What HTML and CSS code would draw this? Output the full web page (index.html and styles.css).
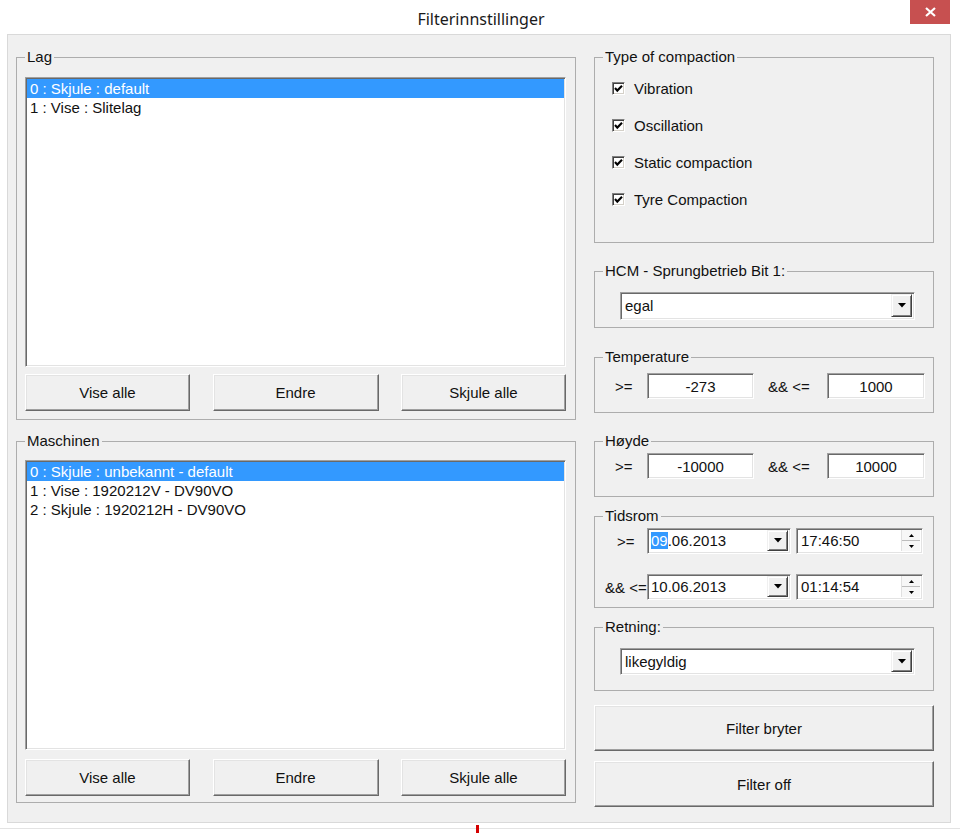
FILE: index.html
```html
<!DOCTYPE html>
<html lang="no">
<head>
<meta charset="utf-8">
<title>Filterinnstillinger</title>
<link rel="stylesheet" href="styles.css">
</head>
<body>
<div class="window">
  <header class="titlebar">
    <div class="tb-left"></div>
    <div class="title">Filterinnstillinger</div>
    <div class="tb-right">
      <button class="close" aria-label="Lukk">
        <svg width="11" height="10" viewBox="0 0 11 10"><path d="M1 1 L10 9 M10 1 L1 9" stroke="#fff" stroke-width="2.2" fill="none"/></svg>
      </button>
    </div>
  </header>

  <main class="client">
    <section class="col-left">
      <fieldset class="group">
        <legend>Lag</legend>
        <div class="inner inner-lag">
          <div class="listbox">
            <div class="item selected">0 : Skjule : default</div>
            <div class="item">1 : Vise : Slitelag</div>
          </div>
          <div class="btnrow">
            <button class="btn btn-small">Vise alle</button>
            <button class="btn btn-small">Endre</button>
            <button class="btn btn-small">Skjule alle</button>
          </div>
        </div>
      </fieldset>

      <fieldset class="group">
        <legend>Maschinen</legend>
        <div class="inner inner-masch">
          <div class="listbox">
            <div class="item selected">0 : Skjule : unbekannt - default</div>
            <div class="item">1 : Vise : 1920212V - DV90VO</div>
            <div class="item">2 : Skjule : 1920212H - DV90VO</div>
          </div>
          <div class="btnrow">
            <button class="btn btn-small">Vise alle</button>
            <button class="btn btn-small">Endre</button>
            <button class="btn btn-small">Skjule alle</button>
          </div>
        </div>
      </fieldset>
    </section>

    <section class="col-right">
      <fieldset class="group">
        <legend>Type of compaction</legend>
        <div class="inner inner-type">
          <label class="check"><span class="cbox"><svg width="11" height="11" viewBox="0 0 11 11"><path d="M2 5 L4.3 7.6 L9 2.8" stroke="#000" stroke-width="2.1" fill="none"/></svg></span>Vibration</label>
          <label class="check"><span class="cbox"><svg width="11" height="11" viewBox="0 0 11 11"><path d="M2 5 L4.3 7.6 L9 2.8" stroke="#000" stroke-width="2.1" fill="none"/></svg></span>Oscillation</label>
          <label class="check"><span class="cbox"><svg width="11" height="11" viewBox="0 0 11 11"><path d="M2 5 L4.3 7.6 L9 2.8" stroke="#000" stroke-width="2.1" fill="none"/></svg></span>Static compaction</label>
          <label class="check"><span class="cbox"><svg width="11" height="11" viewBox="0 0 11 11"><path d="M2 5 L4.3 7.6 L9 2.8" stroke="#000" stroke-width="2.1" fill="none"/></svg></span>Tyre Compaction</label>
        </div>
      </fieldset>

      <fieldset class="group g-hcm">
        <legend>HCM - Sprungbetrieb Bit 1:</legend>
        <div class="inner inner-combo inner-hcm">
          <div class="combo combo-wide">
            <span class="combo-text">egal</span>
            <span class="drop"><svg width="8" height="5" viewBox="0 0 8 5"><path d="M0 0 H8 L4 4.5 Z" fill="#000"/></svg></span>
          </div>
        </div>
      </fieldset>

      <fieldset class="group g-temp">
        <legend>Temperature</legend>
        <div class="inner inner-range inner-temp">
          <span class="op op1">&gt;=</span>
          <span class="field f1">-273</span>
          <span class="op op2">&amp;&amp; &lt;=</span>
          <span class="field f2">1000</span>
        </div>
      </fieldset>

      <fieldset class="group g-hoyde">
        <legend>Høyde</legend>
        <div class="inner inner-range inner-hoyde">
          <span class="op op1">&gt;=</span>
          <span class="field f1">-10000</span>
          <span class="op op2">&amp;&amp; &lt;=</span>
          <span class="field f2">10000</span>
        </div>
      </fieldset>

      <fieldset class="group g-tid">
        <legend>Tidsrom</legend>
        <div class="inner inner-tid">
          <div class="tid-row">
            <span class="op tid-op1">&gt;=</span>
            <div class="combo combo-date">
              <span class="combo-text"><span class="hl">09</span>.06.2013</span>
              <span class="drop"><svg width="8" height="5" viewBox="0 0 8 5"><path d="M0 0 H8 L4 4.5 Z" fill="#000"/></svg></span>
            </div>
            <div class="combo combo-time">
              <span class="combo-text">17:46:50</span>
              <span class="spin">
                <span class="spin-btn"><svg width="5" height="3" viewBox="0 0 5 3"><path d="M0 3 H5 L2.5 0 Z" fill="#000"/></svg></span>
                <span class="spin-btn"><svg width="5" height="3" viewBox="0 0 5 3"><path d="M0 0 H5 L2.5 3 Z" fill="#000"/></svg></span>
              </span>
            </div>
          </div>
          <div class="tid-row">
            <span class="op tid-op2">&amp;&amp; &lt;=</span>
            <div class="combo combo-date">
              <span class="combo-text">10.06.2013</span>
              <span class="drop"><svg width="8" height="5" viewBox="0 0 8 5"><path d="M0 0 H8 L4 4.5 Z" fill="#000"/></svg></span>
            </div>
            <div class="combo combo-time">
              <span class="combo-text">01:14:54</span>
              <span class="spin">
                <span class="spin-btn"><svg width="5" height="3" viewBox="0 0 5 3"><path d="M0 3 H5 L2.5 0 Z" fill="#000"/></svg></span>
                <span class="spin-btn"><svg width="5" height="3" viewBox="0 0 5 3"><path d="M0 0 H5 L2.5 3 Z" fill="#000"/></svg></span>
              </span>
            </div>
          </div>
        </div>
      </fieldset>

      <fieldset class="group g-ret">
        <legend>Retning:</legend>
        <div class="inner inner-combo inner-ret">
          <div class="combo combo-wide combo-ret">
            <span class="combo-text">likegyldig</span>
            <span class="drop"><svg width="8" height="5" viewBox="0 0 8 5"><path d="M0 0 H8 L4 4.5 Z" fill="#000"/></svg></span>
          </div>
        </div>
      </fieldset>

      <button class="btn btn-big btn-bryter">Filter bryter</button>
      <button class="btn btn-big btn-off">Filter off</button>
    </section>
  </main>

  <div class="bottom-edge"><span class="tick"></span></div>
</div>
</body>
</html>
```

FILE: styles.css
```css
* { box-sizing: border-box; }

html, body {
  margin: 0;
  padding: 0;
}

body {
  width: 960px;
  height: 833px;
  overflow: hidden;
  background: #fff;
  font-family: "Liberation Sans", Arial, sans-serif;
  font-size: 15px;
  color: #111;
}

.window {
  display: flex;
  flex-direction: column;
  height: 833px;
}

/* ---------- title bar ---------- */
.titlebar {
  height: 34px;
  display: grid;
  grid-template-columns: 1fr auto 1fr;
  align-items: start;
}

.title {
  font-family: "Noto Sans", "Liberation Sans", sans-serif;
  font-size: 16px;
  line-height: 38px;
  color: #1a1a1a;
  padding-left: 2px;
}

.tb-right {
  display: flex;
  justify-content: flex-end;
  padding-right: 10px;
}

.close {
  width: 40px;
  height: 24px;
  padding: 0;
  border: 0;
  background: #c75050;
  display: flex;
  align-items: center;
  justify-content: center;
}

/* ---------- client area ---------- */
.client {
  margin-left: 7px;
  width: 944px;
  height: 789px;
  background: #f0f0f0;
  border: 1px solid #d9d9d9;
  padding: 14px 16px 0 8px;
  display: flex;
  gap: 18px;
}

.col-left {
  width: 560px;
  display: flex;
  flex-direction: column;
  gap: 13px;
}

.col-right {
  width: 340px;
  display: flex;
  flex-direction: column;
}

/* ---------- group boxes ---------- */
.group {
  margin: 0;
  padding: 0;
  min-width: 0;
  border: 1px solid #adadad;
}

.group legend {
  margin-left: 8px;
  padding: 0 2px;
  height: 16px;
  line-height: 16px;
  font-size: 15px;
  color: #111;
}

.inner-lag {
  padding: 12px 9px 8px 8px;
}

.inner-masch {
  padding: 11px 9px 6px 8px;
}

.inner-lag .btnrow { margin-top: 7px; }
.inner-masch .btnrow { margin-top: 9px; }

/* ---------- list boxes ---------- */
.listbox {
  height: 290px;
  background: #fff;
  border: 1px solid;
  border-color: #a0a0a0 #fff #fff #a0a0a0;
  box-shadow: inset 1px 1px 0 #696969, inset -1px -1px 0 #e3e3e3;
  padding: 1px;
}

.item {
  height: 19px;
  line-height: 19px;
  padding-left: 3px;
  white-space: nowrap;
}

.item.selected {
  background: #3399ff;
  color: #fff;
}

/* ---------- buttons ---------- */
.btnrow {
  display: flex;
  justify-content: space-between;
}

.btn {
  background: #f0f0f0;
  border: 1px solid;
  border-color: #fff #696969 #696969 #fff;
  box-shadow: inset -1px -1px 0 #a0a0a0, inset 1px 1px 0 #e3e3e3;
  font-family: "Liberation Sans", Arial, sans-serif;
  font-size: 15px;
  color: #111;
  padding: 0;
}

.btn-small {
  width: 165px;
  height: 37px;
}

.btn-small:nth-child(2) { width: 166px; }

.btn-big {
  width: 340px;
  height: 46px;
}

.btn-bryter { margin-top: 14px; }
.btn-off { margin-top: 10px; }

/* ---------- checkboxes ---------- */
.inner-type {
  padding: 13px 0 33px 17px;
  display: flex;
  flex-direction: column;
  gap: 17px;
}

.check {
  height: 20px;
  display: flex;
  align-items: center;
  gap: 9px;
}

.cbox {
  width: 13px;
  height: 13px;
  background: #fff;
  border: 1px solid;
  border-color: #808080 #fff #fff #808080;
  box-shadow: inset 1px 1px 0 #404040, inset -1px -1px 0 #d4d0c8;
  display: flex;
  align-items: center;
  justify-content: center;
}

.cbox svg {
  flex: none;
}

/* ---------- combos ---------- */
.g-hcm { margin-top: 20px; }
.g-temp { margin-top: 21px; }
.g-hoyde { margin-top: 20px; }
.g-tid { margin-top: 11px; }
.g-ret { margin-top: 11px; }

.inner-hcm {
  padding: 13px 18px 7px 25px;
}

.inner-ret {
  padding: 13px 18px 15px 25px;
}

.combo {
  display: flex;
  align-items: stretch;
  background: #fff;
  border: 1px solid;
  border-color: #a0a0a0 #fff #fff #a0a0a0;
  box-shadow: inset 1px 1px 0 #696969, inset -1px -1px 0 #e3e3e3;
  padding: 1px 2px 2px 1px;
}

.combo-wide {
  height: 28px;
}

.combo-ret {
  height: 27px;
}

.combo-text {
  flex: 1;
  display: flex;
  align-items: center;
  padding-left: 3px;
  white-space: nowrap;
}

.drop {
  width: 21px;
  background: #f0f0f0;
  border: 1px solid;
  border-color: #f0f0f0 #404040 #404040 #f0f0f0;
  box-shadow: inset 1px 1px 0 #fff, inset -1px -1px 0 #808080;
  display: flex;
  align-items: center;
  justify-content: center;
}

/* ---------- ranges ---------- */
.inner-range {
  display: flex;
  align-items: center;
  padding-left: 20px;
}

.inner-temp { padding-top: 8px; padding-bottom: 13px; }
.inner-hoyde { padding-top: 4px; padding-bottom: 17px; }

.op {
  white-space: nowrap;
}

.op1 { width: 32px; }
.op2 { width: 73px; padding-left: 14px; }

.field {
  height: 26px;
  background: #fff;
  border: 1px solid;
  border-color: #a0a0a0 #fff #fff #a0a0a0;
  box-shadow: inset 1px 1px 0 #696969, inset -1px -1px 0 #e3e3e3;
  display: flex;
  align-items: center;
  justify-content: center;
}

.f1 { width: 107px; }
.f2 { width: 98px; }

/* ---------- tidsrom ---------- */
.inner-tid {
  padding: 4px 0 7px 0;
  display: flex;
  flex-direction: column;
  gap: 20px;
}

.tid-row {
  display: flex;
  align-items: center;
  height: 26px;
}

.tid-op1 { width: 52px; padding-left: 22px; }
.tid-op2 { width: 52px; padding-left: 10px; }

.combo-date {
  width: 144px;
  height: 26px;
}

.combo-time {
  width: 127px;
  height: 26px;
  margin-left: 5px;
}

.combo-date .combo-text { padding-left: 2px; }

.hl {
  background: #3399ff;
  color: #fff;
}

.spin {
  width: 19px;
  display: flex;
  flex-direction: column;
  background: #f7f7f7;
  border-left: 1px solid #e0e0e0;
}

.spin-btn {
  flex: 1;
  display: flex;
  align-items: center;
  justify-content: center;
}

.spin-btn + .spin-btn {
  border-top: 1px solid #bdbdbd;
}

/* ---------- bottom edge ---------- */
.bottom-edge {
  height: 10px;
  padding-left: 476px;
  background: linear-gradient(#fff 0 5px, #e3e3e3 5px 6px, #fff 6px);
}

.tick {
  display: block;
  width: 3px;
  height: 8px;
  margin-top: 2px;
  background: #d40000;
}
```
